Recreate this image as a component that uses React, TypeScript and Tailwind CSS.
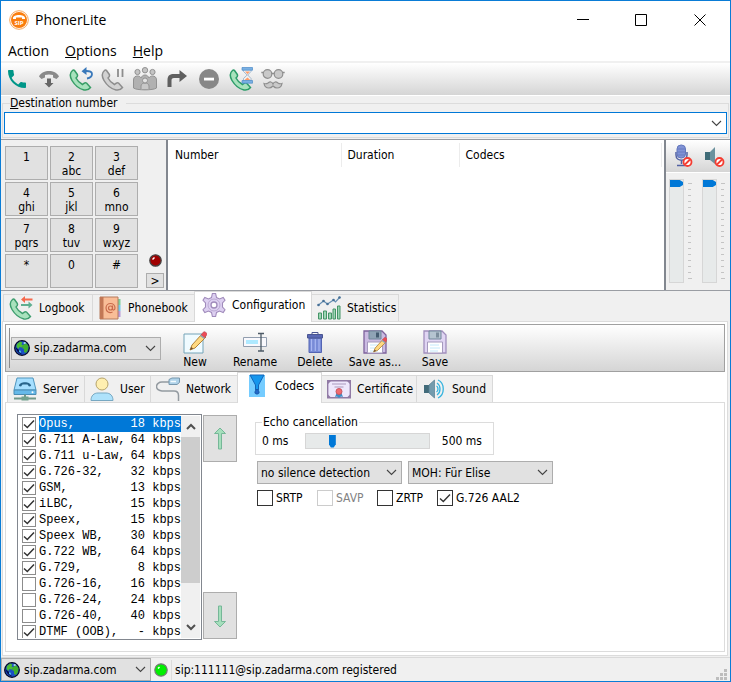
import type { ReactNode } from "react";

const HANDSET =
  "M3.5 3.5C.5 6 1 10 3 13.500c3 5 7.500 8.500 12 9.500 3 .5 5-.5 6.500-2.500l-4-4.500c-1.500-1-2.500 0-4 1.500-3-1.500-5-3.500-6.500-6.500C9 9.500 9 8.500 8 7L5.500 3.500c-.5-.7-1.300-.7-2 0z";

function Svg({ size = "size-6", box = "0 0 24 24", children }: { size?: string; box?: string; children: ReactNode }) {
  return (
    <svg viewBox={box} className={`${size} shrink-0`} fill="none" aria-hidden="true">
      {children}
    </svg>
  );
}

function Chevron() {
  return (
    <Svg size="w-[11px] h-[7px]" box="0 0 11 7">
      <path d="M1 1l4.500 4.500L10 1" stroke="#444" strokeWidth="1.1" />
    </Svg>
  );
}

function Globe() {
  return (
    <Svg size="size-4" box="0 0 16 16">
      <circle cx="8" cy="8" r="7.300" fill="#1b4fc4" stroke="#050a25" strokeWidth="1.300" />
      <path d="M1.500 7c1 4 3 6.500 6.500 7.500L5 10z" fill="#07104f" />
      <path d="M3 4l3-2.500 2.500 1-1 2 2 1-2 2-2-.5-1 2-2-2z" fill="#4bbd35" />
      <path d="M9 5l3-2 2.500 3-.5 4-2 3-2-1V9L8 8z" fill="#3fae2f" />
      <path d="M9 3l2-1 1 1-1 1z" fill="#c7f2ff" />
      <path d="M5 10l2 1v2l-2-1z" fill="#45b7e8" />
    </Svg>
  );
}

/* ---------- toolbar icons ---------- */

const callIcons = [
  {
    label: "Call",
    icon: (
      <path
        fill="#009688"
        d="M6.620 10.790c1.440 2.830 3.760 5.140 6.590 6.590l2.200-2.200c.27-.27.67-.36 1.020-.24 1.120.37 2.330.57 3.570.57.55 0 1 .45 1 1V20c0 .55-.45 1-1 1-9.390 0-17-7.610-17-17 0-.55.45-1 1-1h3.500c.55 0 1 .45 1 1 0 1.250.2 2.450.57 3.570.11.35.03.74-.25 1.020l-2.200 2.200z"
      />
    ),
  },
  {
    label: "Hang up",
    icon: (
      <>
        <path d="M2 9.500C4 5.500 8 4 12 4s8 1.500 10 5.500L19.500 12 16 10.500V8c-2.500-.8-5.500-.8-8 0v2.500L4.500 12z" fill="#8a8a8a" />
        <path d="M10 11.500h4V16h2.500L12 20.500 7.500 16H10z" fill="#666" />
      </>
    ),
  },
  {
    label: "Redial",
    icon: (
      <>
        <path d={HANDSET} fill="#a8e2bd" stroke="#379d66" strokeWidth="1.500" />
        <path d="M18 11.500c3-.5 5-2 5-4.500 0-2-2-3.200-6.500-3" stroke="#3978ba" strokeWidth="1.800" />
        <path d="M12.500 4.200L17.500 0v8z" fill="#3978ba" />
      </>
    ),
  },
  {
    label: "Hold",
    icon: (
      <>
        <path d={HANDSET} fill="#d2d2d2" stroke="#8d8d8d" strokeWidth="1.500" />
        <path d="M17 2v8M21.500 2v8" stroke="#8d8d8d" strokeWidth="1.800" />
      </>
    ),
  },
  {
    label: "Conference",
    icon: (
      <>
        <g fill="#c4c4c4" stroke="#929292">
          <circle cx="4.500" cy="5" r="2.600" />
          <circle cx="12" cy="3.200" r="2.700" />
          <circle cx="19.500" cy="5" r="2.600" />
        </g>
        <path d="M.5 21v-8c0-3 2-4 4-4s3 1 3.500 2c1-2 2-3 4-3s3 1 4 3c.5-1 1.500-2 3.500-2s4 1 4 4v8c-3 2.500-20 2.500-23 0z" fill="#b1b1b1" stroke="#929292" />
        <path d="M8 22v-3c0-2 2-3 4-3s4 1 4 3v3" fill="#c8c8c8" stroke="#929292" />
        <circle cx="12" cy="13.500" r="2.500" fill="#e2e2e2" stroke="#929292" />
      </>
    ),
  },
  {
    label: "Transfer",
    icon: <path d="M2.500 20v-7C2.500 8.500 5 7 9 7h5.500V3l7.500 6-7.500 6v-4H9c-2 0-2.500 1-2.500 2.500V20z" fill="#5f5f5f" />,
  },
  {
    label: "Do not disturb",
    icon: (
      <>
        <circle cx="12" cy="12" r="10" fill="#878787" />
        <rect x="7" y="10.700" width="10" height="2.800" fill="#fff" />
      </>
    ),
  },
  {
    label: "Auto answer",
    icon: (
      <>
        <path d={HANDSET} fill="#a8e2bd" stroke="#2c9c69" strokeWidth="1.500" />
        <path d="M14.500 2v2.500l3.700 3.500-3.700 3.500V14h7.500v-2.500L18.700 8 22 4.500V2z" fill="#f2f2f2" stroke="#8fa9c5" strokeWidth=".8" />
        <path d="M16 4.500h5L18.500 7zM15.500 13l3-2.500 2.700 2.500z" fill="#ff9c68" />
        <path d="M13 .5h10.500v2.700H13zM13 13.500h10.500v2.700H13z" fill="#7ab0e3" stroke="#4c8bc9" strokeWidth=".7" />
      </>
    ),
  },
  {
    label: "Anonymous",
    icon: (
      <>
        <g fill="#c9c9c9" stroke="#8f8f8f" strokeWidth="1.200">
          <circle cx="6.500" cy="7" r="4.300" />
          <circle cx="17.500" cy="7" r="4.300" />
          <path d="M12 17c-1-2.500-3-2.500-5-1-1.500 1-2.500 1-4 .5.500 3 3 4.500 5 4.500 2 0 3-1 4-2 1 1 2 2 4 2s4.500-1.500 5-4.500c-1.500.5-2.500.5-4-.5-2-1.500-4-1.500-5 1z" />
        </g>
        <path d="M10.500 6.500h3M.3 5.500h2M21.700 5.500h2" stroke="#8f8f8f" strokeWidth="1.300" />
      </>
    ),
  },
];

function Pencil() {
  return (
    <>
      <path d="M7 20l2-5L19 4l4 3-11 11z" fill="#ffd980" stroke="#b18239" />
      <path d="M18 5l2.500-3c1-1 4 1 3.500 2.500L21.500 8z" fill="#ed4b55" stroke="#b7505c" strokeWidth=".7" />
      <path d="M17.500 5.500l4 3" stroke="#8ba6b8" strokeWidth="1.500" />
      <path d="M7 20l1.200-3 2 1.500z" fill="#6d4c32" />
    </>
  );
}

function Floppy({ pencil = false }: { pencil?: boolean }) {
  return (
    <>
      <path d="M1 1h18l4 4v18H1z" fill={pencil ? "#cbbbe2" : "#e0d5f3"} stroke={pencil ? "#7d629c" : "#a18fbd"} strokeWidth="1.300" />
      <path d="M6 1h12v8H6z" fill={pencil ? "#8fa3b5" : "#b5c4d0"} stroke="#70869a" />
      <path d="M13 2.500h3v5h-3z" fill={pencil ? "#445b70" : "#7b8d9c"} />
      <path d="M4.500 12h15v11h-15z" fill="#fff" stroke="#a59abd" />
      <path d="M7 15h9M7 18h10M7 21h8" stroke="#c4e8fa" />
      {pencil && (
        <g transform="translate(5 6) scale(.8)">
          <Pencil />
        </g>
      )}
    </>
  );
}

const accountActions = [
  {
    label: "New",
    icon: (
      <>
        <path d="M1 4h19v19H1z" fill="#f0fbff" stroke="#74a4b8" />
        <Pencil />
      </>
    ),
  },
  {
    label: "Rename",
    icon: (
      <>
        <path d="M.5 7.500h23v9H.5z" fill="#f9f9fd" stroke="#929eaf" />
        <path d="M3 10h12v4H3z" fill="#aee9ff" />
        <path d="M15 3.500h6M18 4v17M15 21h6" stroke="#4c5a66" strokeWidth="1.300" />
      </>
    ),
  },
  {
    label: "Delete",
    icon: (
      <>
        <path d="M6 8h12.500v14.500H6z" fill="#788bd7" stroke="#5364b3" />
        <path d="M8.500 9v12M12.300 9v12M16 9v12" stroke="#a9b7f2" strokeWidth="1.200" />
        <path d="M4.500 4.500h15V8h-15z" fill="#5968b5" stroke="#4b5692" />
        <path d="M9 4V2.500h6V4" stroke="#4b5692" />
      </>
    ),
  },
  { label: "Save as...", icon: <Floppy pencil /> },
  { label: "Save", icon: <Floppy /> },
];

/* ---------- tab icons ---------- */

const logbookIcon = (
  <>
    <path d={HANDSET} fill="#a8e2bd" stroke="#3d9d6e" strokeWidth="1.400" />
    <path d="M12 3.500L16 0v2.500h7.500v2H16V7z" fill="#f5694d" />
    <path d="M23.500 9L19.500 5.500V8H12v2h7.500v2.500z" fill="#5faf91" />
  </>
);
const phonebookIcon = (
  <>
    <path d="M20 3h2.500v6H20z" fill="#7ccf9a" />
    <path d="M20 9h2.500v6H20z" fill="#72c9ef" />
    <path d="M20 15h2.500v6H20z" fill="#b99ad9" />
    <path d="M2 1h18v22H2z" fill="#f9bd97" stroke="#b57b5d" />
    <path d="M2 1h3.500v22H2z" fill="#c27755" />
    <circle cx="12.500" cy="12" r="2" stroke="#c86a4b" strokeWidth="1.200" />
    <path d="M14.500 9.500v3.500c0 1.500 2.500 1.500 2.500-1 0-6-9-6-9 0 0 4 3.500 5.500 6.500 4" stroke="#c86a4b" strokeWidth="1.200" />
  </>
);
const gearIcon = (
  <>
    <path
      d="M9.500 4.500l.9-4h3.200l.9 4 3 1.500 3.700-1.500 1.800 2.800-2.500 2.700v4l2.500 2.700-1.800 2.800-3.700-1.500-3 1.500-.9 4h-3.200l-.9-4-3-1.500-3.700 1.500L1 16.700 3.500 14v-4L1 7.300l1.800-2.800L6.500 6z"
      fill="#ddd0f1"
      stroke="#a08bbb"
      strokeWidth="1.100"
    />
    <circle cx="12" cy="12" r="6" stroke="#bba9d3" />
    <circle cx="12" cy="12" r="3" fill="#fff" stroke="#a08bbb" strokeWidth="1.300" />
  </>
);
const statsIcon = (
  <>
    <g fill="#9bd6b3" stroke="#459467">
      <path d="M1.500 17h3v6h-3zM6.500 15h3v8h-3zM11.500 17h3v6h-3zM16 13h2.500v10H16zM20.500 10H23v13h-2.500z" />
    </g>
    <path d="M1.500 9l5-4 4 3 6-4 2 2 4.500-5" stroke="#668fb3" strokeWidth="1.200" />
    <g fill="#456f96">
      <circle cx="1.500" cy="9" r="1.300" />
      <circle cx="6.500" cy="5" r="1.300" />
      <circle cx="10.500" cy="8" r="1.300" />
      <circle cx="16.500" cy="4" r="1.300" />
      <circle cx="22.500" cy="1.500" r="1.300" />
    </g>
  </>
);
const serverIcon = (
  <>
    <path d="M4 1h16l3 12H1z" fill="#a6dfff" stroke="#4f95bd" />
    <path d="M1 13h22v4.500H1z" fill="#66b9e9" stroke="#4a8cb3" />
    <path d="M6 9c0-5 12-5 12 0l-2 .5-1.500-2h-5l-1.500 2z" fill="#28648b" />
    <circle cx="19.500" cy="15.300" r="1" fill="#fff" />
    <path d="M12 17.500v3M1 21.500h22" stroke="#71988a" strokeWidth="2" />
    <path d="M8.500 19.500h7v4h-7z" fill="#73a28f" />
  </>
);
const userIcon = (
  <>
    <circle cx="12" cy="7" r="6" fill="#ffefb0" stroke="#b6a36a" />
    <path d="M1 23.500c0-5 3-7.500 7-7.500h8c4 0 7 2.500 7 7.500z" fill="#aee2fb" stroke="#77a8c2" />
  </>
);
const networkIcon = (
  <>
    <path d="M13 5H6c-3 0-5.500 2-5.500 4.500S3 14 6 14h12c3.500 0 4.500 2 4.500 4.500V24" stroke="#939aa0" strokeWidth="1.500" />
    <path d="M13 2.500l3-1.500h7.500v4.500l-2.500 2h-8z" fill="#afd2e9" stroke="#7797ad" />
    <path d="M14.500 4.500h5.500" stroke="#f2fbff" strokeWidth="1.500" />
  </>
);
const codecsIcon = (
  <>
    <path d="M4 1h16v22H4z" fill="#75ccff" />
    <path d="M5 1h14l-5.500 10v5h-3v-5z" fill="#1596ed" stroke="#1264b9" />
    <path d="M12 15c-3 3-2.500 5 0 5s3-2 0-5z" fill="#2269c9" stroke="#1856a9" />
  </>
);
const certificateIcon = (
  <>
    <path d="M.7 3.700h22.600v17H.7z" fill="#eee7fc" stroke="#917ba5" strokeWidth="1.400" />
    <path d="M5 7h14M7.500 10h9" stroke="#aa9abc" strokeWidth="1.200" />
    <path d="M10 15l-2 5 2-.5 2 1.500 2-1.500 2 .5-2-5z" fill="#3e8dc6" />
    <circle cx="12" cy="14.500" r="3" fill="#f26a6f" stroke="#c85562" />
    <path d="M1 4h3L1 7zM23 4h-3l3 3zM1 20.500h3l-3-3zM23 20.500h-3l3-3z" fill="#917ba5" />
  </>
);
const soundIcon = (
  <>
    <path d="M2 8h5v8H2z" fill="#426b7a" />
    <path d="M7 8l5.500-5v18L7 16z" fill="#739bad" stroke="#577e90" strokeWidth=".7" />
    <path d="M14.500 9c2 1 2 5 0 6M15 6c4 2.500 4 9.500 0 12M16 3c7 3 7 15 0 18" stroke="#34b3de" strokeWidth="1.300" />
  </>
);

const mainTabs = [
  { label: "Logbook", icon: logbookIcon, width: "w-[90px]" },
  { label: "Phonebook", icon: phonebookIcon, width: "w-[103px]" },
  { label: "Configuration", icon: gearIcon, width: "w-[118px]", selected: true },
  { label: "Statistics", icon: statsIcon, width: "w-[88px]" },
];

const configTabs = [
  { label: "Server", icon: serverIcon, width: "w-[78px]" },
  { label: "User", icon: userIcon, width: "w-[67px]" },
  { label: "Network", icon: networkIcon, width: "w-[88px]" },
  { label: "Codecs", icon: codecsIcon, width: "w-[85px]", selected: true },
  { label: "Certificate", icon: certificateIcon, width: "w-[96px]" },
  { label: "Sound", icon: soundIcon, width: "w-[77px]" },
];

const codecs = [
  { name: "Opus,", rate: "18", on: true },
  { name: "G.711 A-Law,", rate: "64", on: true },
  { name: "G.711 u-Law,", rate: "64", on: true },
  { name: "G.726-32,", rate: "32", on: true },
  { name: "GSM,", rate: "13", on: true },
  { name: "iLBC,", rate: "15", on: true },
  { name: "Speex,", rate: "15", on: true },
  { name: "Speex WB,", rate: "30", on: true },
  { name: "G.722 WB,", rate: "64", on: true },
  { name: "G.729,", rate: "8", on: true },
  { name: "G.726-16,", rate: "16", on: false },
  { name: "G.726-24,", rate: "24", on: false },
  { name: "G.726-40,", rate: "40", on: false },
  { name: "DTMF (OOB),", rate: "-", on: true },
];

const keys = [
  ["1", ""], ["2", "abc"], ["3", "def"],
  ["4", "ghi"], ["5", "jkl"], ["6", "mno"],
  ["7", "pqrs"], ["8", "tuv"], ["9", "wxyz"],
  ["*", ""], ["0", ""], ["#", ""],
];

type Tab = { label: string; icon: ReactNode; width: string; selected?: boolean };

function TabStrip({ tabs, label }: { tabs: Tab[]; label: string }) {
  return (
    <div role="tablist" aria-label={label} className="flex items-end">
      {tabs.map((tab) => (
        <button
          key={tab.label}
          role="tab"
          aria-selected={!!tab.selected}
          className={`${tab.width} -mr-px flex shrink-0 items-center gap-1.5 whitespace-nowrap border border-[#d9d9d9] ${
            tab.selected ? "z-10 -mb-px h-[31px] border-b-0 bg-white pb-1 pl-[7px]" : "h-[27px] border-b-0 bg-[#f0f0f0] pl-[5px]"
          }`}
        >
          <Svg>{tab.icon}</Svg>
          {tab.label}
        </button>
      ))}
    </div>
  );
}

function Check({ label, on = false, disabled = false }: { label: string; on?: boolean; disabled?: boolean }) {
  return (
    <label className={`flex h-4 w-[60px] items-center gap-[3px] whitespace-nowrap ${disabled ? "text-[#838383]" : ""}`}>
      <span className="grid size-4 shrink-0 place-items-center">
        <input
          type="checkbox"
          defaultChecked={on}
          disabled={disabled}
          className="peer col-start-1 row-start-1 size-4 appearance-none border border-[#333] bg-white disabled:border-[#ccc]"
        />
        <svg viewBox="0 0 12 12" className="pointer-events-none col-start-1 row-start-1 hidden size-3 peer-checked:block" fill="none">
          <path d="M1 6.500L4.300 9.500 11 2.500" stroke="#333" strokeWidth="1.400" />
        </svg>
      </span>
      {label}
    </label>
  );
}

function Combo({ label, value, width, globe = false }: { label: string; value: string; width: string; globe?: boolean }) {
  return (
    <div className={`${width} grid h-[23px] shrink-0 items-center border border-[#adadad] bg-[#e1e1e1]`}>
      <select
        aria-label={label}
        className={`col-start-1 row-start-1 h-full w-full appearance-none bg-transparent outline-none ${globe ? "pl-[22px]" : "pl-[3px]"}`}
      >
        <option>{value}</option>
      </select>
      <span className="pointer-events-none col-start-1 row-start-1 flex items-center justify-between pr-1 pl-0.5">
        {globe ? <Globe /> : <span />}
        <Chevron />
      </span>
    </div>
  );
}

function Volume({ label }: { label: string }) {
  return (
    <div className="flex gap-1">
      <input
        type="range"
        aria-label={label}
        defaultValue={100}
        className="h-[104px] w-[15px] appearance-none border border-[#d6d6d6] bg-[#e7eaea] [direction:rtl] [writing-mode:vertical-lr] [&::-webkit-slider-thumb]:h-[7px] [&::-webkit-slider-thumb]:w-[13px] [&::-webkit-slider-thumb]:appearance-none [&::-webkit-slider-thumb]:bg-[#0078d7] [&::-webkit-slider-thumb]:[clip-path:polygon(0_0,75%_0,100%_30%,100%_70%,75%_100%,0_100%)]"
      />
      <div className="flex h-[104px] w-2.5 flex-col justify-between py-1">
        {Array.from({ length: 17 }, (_, i) => (
          <span key={i} className={`h-px bg-[#c4c4c4] ${i === 0 || i === 16 ? "w-1" : "w-[3px]"}`} />
        ))}
      </div>
    </div>
  );
}

function Blocked() {
  return (
    <>
      <circle cx="18.500" cy="18" r="4" fill="#fff" stroke="#f43d32" strokeWidth="1.800" />
      <path d="M16 20.500l5-5" stroke="#f43d32" strokeWidth="1.800" />
    </>
  );
}

export default function App() {
  return (
    <div className="flex min-h-screen w-full flex-col border border-[#0a7cd6] bg-[#f0f0f0] font-['DejaVu_Sans_Condensed','Noto_Sans',sans-serif] text-[12px] leading-[14px] text-black">
      {/* Title bar and menu */}
      <header className="border-b-2 border-[#f0f0f0] bg-white font-['Open_Sans',sans-serif] text-sm leading-5">
        <div className="flex h-10 items-center justify-between pb-0.5 pl-2">
          <h1 className="flex items-center gap-1.5">
            <svg viewBox="0 0 20 20" className="size-5" fill="none" aria-hidden="true">
              <circle cx="10" cy="10" r="9.300" fill="#fff" stroke="#f5a65a" />
              <circle cx="10" cy="10" r="8" fill="#fa7d0d" />
              <path d="M4 8c0-4 12-4 12 0v1h-3V7.500H7V9H4z" fill="#fff" />
              <text x="10" y="15" textAnchor="middle" fontSize="6" fontWeight="700" fill="#fff">SIP</text>
            </svg>
            PhonerLite
          </h1>
          <div className="flex">
            <button aria-label="Minimize" className="grid h-9 w-[58px] place-items-center">
              <svg viewBox="0 0 12 12" className="size-3" stroke="#000"><path d="M0 5.500h12" /></svg>
            </button>
            <button aria-label="Maximize" className="grid h-9 w-[58px] place-items-center">
              <svg viewBox="0 0 12 12" className="size-3" fill="none" stroke="#000"><path d="M.5.5h11v11H.5z" /></svg>
            </button>
            <button aria-label="Close" className="grid h-9 w-[60px] place-items-center">
              <svg viewBox="0 0 12 12" className="size-3" stroke="#000"><path d="M.5.5l11 11M11.500.5l-11 11" /></svg>
            </button>
          </div>
        </div>
        <nav className="flex h-5 items-center gap-4 pl-[7px]">
          <button>Action</button>
          <button><u>O</u>ptions</button>
          <button><u>H</u>elp</button>
        </nav>
      </header>

      {/* Call toolbar */}
      <div role="toolbar" aria-label="Call" className="flex h-[33px] border-b border-white bg-linear-to-b from-white to-[#d5d5d5]">
        {callIcons.map((item) => (
          <button key={item.label} aria-label={item.label} className="grid h-8 w-8 place-items-center">
            <Svg>{item.icon}</Svg>
          </button>
        ))}
      </div>

      {/* Destination */}
      <fieldset className="mx-px mb-px border border-[#dcdcdc] px-px pt-0.5 pb-[3px]">
        <legend className="ml-1.5 pr-2"><label htmlFor="destination"><u>D</u>estination number</label></legend>
        <div className="flex h-[22px] items-center border border-[#0078d7] bg-white pr-1">
          <input id="destination" className="h-full min-w-0 flex-1 px-1 outline-none" />
          <button aria-label="Show recent numbers"><Chevron /></button>
        </div>
      </fieldset>

      {/* Keypad, calls, volume */}
      <section className="flex border-y border-[#9a9da3]">
        <div className="flex shrink-0 gap-1.5 pt-1.5 pb-0.5 pl-1">
          <div className="grid grid-cols-3 gap-0.5">
            {keys.map(([digit, letters]) => (
              <button key={digit} className="flex h-[34px] w-[43px] flex-col items-center border border-[#adadad] bg-[#e1e1e1] pt-[3px]">
                <span>{digit}</span>
                <span>{letters}</span>
              </button>
            ))}
          </div>
          <div className="flex w-[22px] flex-col items-center justify-end gap-1.5">
            <svg viewBox="0 0 13 13" className="size-[13px]" aria-hidden="true">
              <circle cx="6.500" cy="6.500" r="5.700" fill="#a00000" stroke="#454545" strokeWidth="1.300" />
              <path d="M3.500 5.500l2-2" stroke="#fff" strokeWidth="1.500" />
            </svg>
            <button aria-label="Expand keypad" className="h-[15px] w-[18px] border border-[#adadad] bg-[#e1e1e1] leading-3">&gt;</button>
          </div>
        </div>
        <div className="min-w-0 flex-1 border-x-2 border-[#82878f] bg-white pt-[3px] pr-0.5">
          <table className="w-full table-fixed text-left">
            <thead>
              <tr className="h-6">
                <th className="w-[173px] border-r border-[#ececec] pl-[7px] font-normal">Number</th>
                <th className="w-[118px] border-r border-[#ececec] pl-1.5 font-normal">Duration</th>
                <th className="border-r border-[#ececec] pl-1.5 font-normal">Codecs</th>
              </tr>
            </thead>
          </table>
        </div>
        <div className="w-16 shrink-0">
          <div className="flex h-[33px] items-center gap-2 border-b border-white bg-linear-to-b from-white to-[#d5d5d5] pl-[3px]">
            <button aria-label="Mute microphone">
              <Svg>
                <path d="M7 8v3c0 7 11 7 11 0V8M12.500 16v4M8 21.500h8" stroke="#5261a3" strokeWidth="1.500" />
                <rect x="8" y="1" width="8.500" height="13" rx="4" fill="#8092d5" stroke="#6377bc" />
                <path d="M8 5h8M8 8h8M8 11h8" stroke="#687bbf" />
                <Blocked />
              </Svg>
            </button>
            <button aria-label="Mute speaker">
              <Svg>
                <path d="M4 8h5v8H4z" fill="#406c78" />
                <path d="M9 8l5-5v17l-5-4z" fill="#6c929e" />
                <Blocked />
              </Svg>
            </button>
          </div>
          <div className="flex gap-1 pt-1.5 pl-[3px]">
            <Volume label="Microphone volume" />
            <Volume label="Speaker volume" />
          </div>
        </div>
      </section>

      {/* Main pages */}
      <main className="flex flex-1 flex-col pr-0.5 pl-px">
        <div className="pl-px">
          <TabStrip tabs={mainTabs} label="Pages" />
        </div>
        <div className="flex flex-1 flex-col border border-[#dcdcdc] bg-white pt-0.5 pr-0.5 pb-[3px] pl-0.5">
          <div role="toolbar" aria-label="Account" className="flex h-12 items-center border border-[#a0a0a0] bg-linear-to-b from-white to-[#d5d5d5] pl-[3px]">
            <span className="mr-px h-10 w-px bg-[#8c8c8c]" />
            <Combo label="Account" value="sip.zadarma.com" width="w-[150px]" globe />
            <div className="ml-1 flex pt-0.5">
              {accountActions.map((item) => (
                <button key={item.label} className="flex w-[60px] flex-col items-center gap-px whitespace-nowrap">
                  <Svg>{item.icon}</Svg>
                  {item.label}
                </button>
              ))}
            </div>
          </div>

          <div className="px-0.5">
            <TabStrip tabs={configTabs} label="Configuration" />
          </div>
          <div className="flex flex-1 items-start border border-[#dcdcdc] bg-white p-[11px]">
            <div className="flex h-[226px] w-[185px] shrink-0 overflow-hidden border border-[#82878f] p-px">
              <ul className="flex-1 overflow-hidden pl-0.5 font-['Liberation_Mono',monospace] text-[12px] leading-4">
                {codecs.map((codec, i) => (
                  <li key={codec.name} className="h-4">
                    <label className="flex h-4 gap-0.5">
                      <span className="grid size-4 shrink-0 place-items-center">
                        <input
                          type="checkbox"
                          defaultChecked={codec.on}
                          className="peer col-start-1 row-start-1 size-3.5 appearance-none border border-[#8c8c8c] bg-white"
                        />
                        <svg viewBox="0 0 12 12" className="pointer-events-none col-start-1 row-start-1 hidden size-3 peer-checked:block" fill="none">
                          <path d="M1 6.500L4.300 9.500 11 2.500" stroke="#333" strokeWidth="1.500" />
                        </svg>
                      </span>
                      <span className={`flex flex-1 justify-between whitespace-pre ${i === 0 ? "bg-[#0078d7] text-white" : ""}`}>
                        <span>{codec.name}</span>
                        <span>{codec.rate} kbps</span>
                      </span>
                    </label>
                  </li>
                ))}
              </ul>
              <div className="flex w-[19px] shrink-0 flex-col items-center bg-[#f0f0f0]">
                <button aria-label="Scroll up" className="grid h-[21px] w-full place-items-center">
                  <svg viewBox="0 0 10 7" className="h-[7px] w-2.5" fill="none"><path d="M1 6l4-4 4 4" stroke="#505050" strokeWidth="2" /></svg>
                </button>
                <div className="h-[146px] w-full bg-[#cdcdcd]" />
                <button aria-label="Scroll down" className="mt-auto grid h-[21px] w-full place-items-center">
                  <svg viewBox="0 0 10 7" className="h-[7px] w-2.5" fill="none"><path d="M1 1l4 4 4-4" stroke="#505050" strokeWidth="2" /></svg>
                </button>
              </div>
            </div>
            <div className="ml-px flex h-[226px] shrink-0 flex-col justify-between py-px">
              <button aria-label="Move codec up" className="grid h-[47px] w-[34px] place-items-center border border-[#adadad] bg-[#e1e1e1]">
                <Svg><path d="M12 1l5.500 5.500h-4V22h-3V6.500h-4z" fill="#a5dfbc" stroke="#76b798" /></Svg>
              </button>
              <button aria-label="Move codec down" className="grid h-[47px] w-[34px] place-items-center border border-[#adadad] bg-[#e1e1e1]">
                <Svg><path d="M12 23l5.500-5.500h-4V2h-3v15.500h-4z" fill="#a5dfbc" stroke="#76b798" /></Svg>
              </button>
            </div>

            <div className="mt-px ml-[18px] flex flex-col gap-1.5">
              <fieldset className="h-10 w-[239px] border border-[#dcdcdc] px-1.5">
                <legend className="px-px">Echo cancellation</legend>
                <div className="flex h-6 items-center justify-between pr-[5px]">
                  <span>0 ms</span>
                  <input
                    type="range"
                    aria-label="Echo cancellation length"
                    max={500}
                    defaultValue={100}
                    className="ml-1 h-4 w-[125px] appearance-none border border-[#d6d6d6] bg-[#e7eaea] [&::-webkit-slider-thumb]:h-[13px] [&::-webkit-slider-thumb]:w-[7px] [&::-webkit-slider-thumb]:appearance-none [&::-webkit-slider-thumb]:bg-[#0078d7] [&::-webkit-slider-thumb]:[clip-path:polygon(0_0,100%_0,100%_75%,70%_100%,30%_100%,0_75%)]"
                  />
                  <span>500 ms</span>
                </div>
              </fieldset>
              <div className="ml-0.5 flex gap-1.5">
                <Combo label="Silence detection" value="no silence detection" width="w-[145px]" />
                <Combo label="Music on hold" value="MOH: Für Elise" width="w-[145px]" />
              </div>
              <div className="ml-0.5 flex">
                <Check label="SRTP" />
                <Check label="SAVP" disabled />
                <Check label="ZRTP" />
                <Check label="G.726 AAL2" on />
              </div>
            </div>
          </div>
        </div>
      </main>

      {/* Status bar */}
      <footer className="mt-px flex h-6 items-center border-t border-[#d9d9d9]">
        <Combo label="Active account" value="sip.zadarma.com" width="w-[150px]" globe />
        <svg viewBox="0 0 14 14" className="mx-[3px] size-3.5 shrink-0" aria-hidden="true">
          <circle cx="7" cy="7" r="6.200" fill="#00ef00" stroke="#777" strokeWidth="1.200" />
          <path d="M4 5.500L5.500 4" stroke="#fff" strokeWidth="1.500" />
        </svg>
        <span className="flex h-5 flex-1 items-center border-l border-[#dcdcdc] pl-[3px]">sip:111111@sip.zadarma.com registered</span>
        <svg viewBox="0 0 12 12" className="mr-0.5 size-3 shrink-0 self-end" fill="#bdbdbd" aria-hidden="true">
          <path d="M8 0h3v3H8zM4 4h3v3H4zM8 4h3v3H8zM0 8h3v3H0zM4 8h3v3H4zM8 8h3v3H8z" />
        </svg>
      </footer>
    </div>
  );
}
